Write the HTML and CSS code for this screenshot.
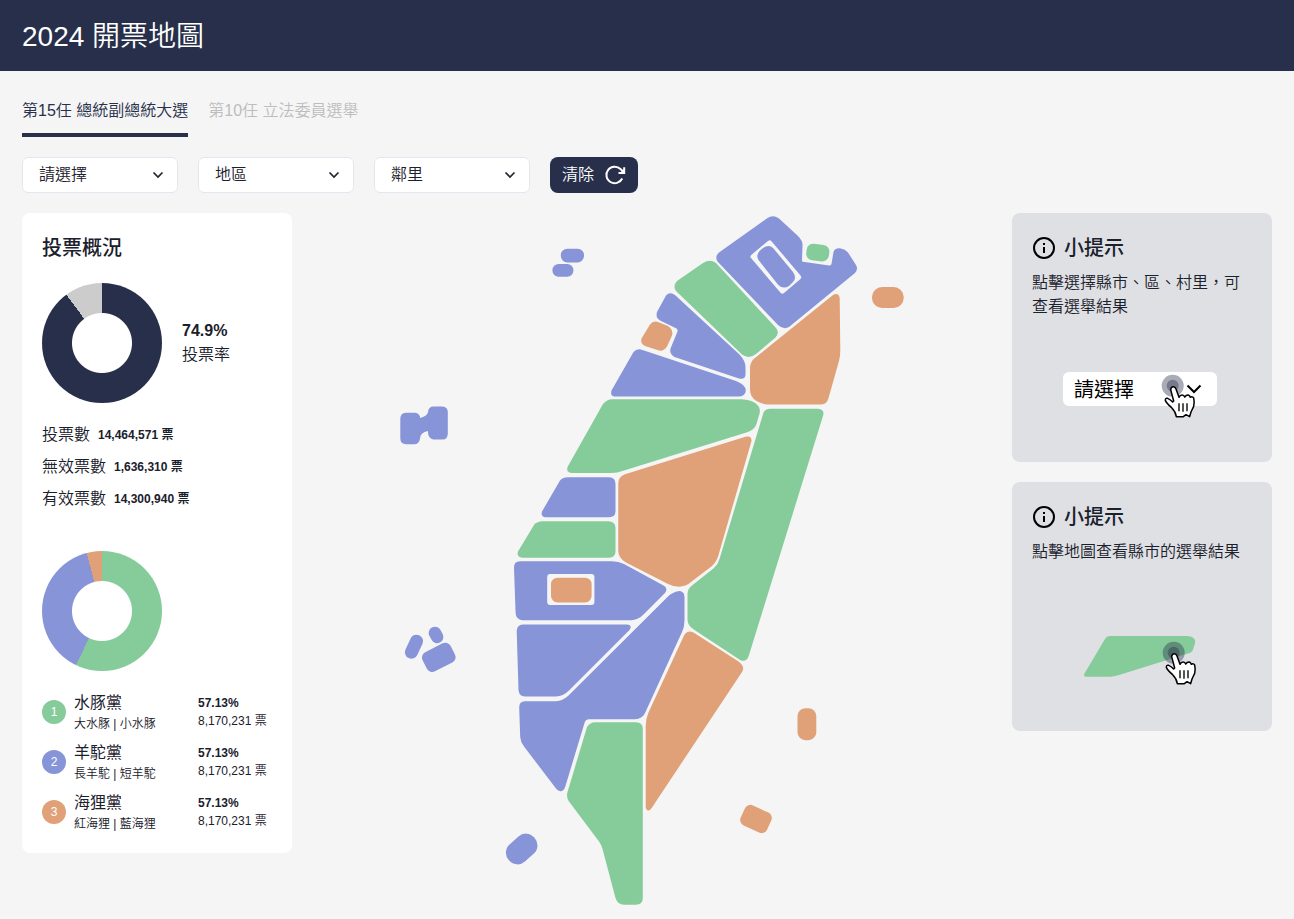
FILE: index.html
```html
<!DOCTYPE html>
<html lang="zh-Hant">
<head>
<meta charset="utf-8">
<title>2024 開票地圖</title>
<link rel="stylesheet" href="styles.css">
</head>
<body>
<svg class="defs" width="0" height="0">
  <symbol id="chevron" viewBox="0 0 12 12"><path d="M1.5 3.5 6 8l4.500-4.500" fill="none" stroke="#1f2430" stroke-width="1.700"/></symbol>
  <symbol id="info" viewBox="0 0 24 24"><circle cx="12" cy="12" r="10" fill="none" stroke="#000" stroke-width="2"/><path d="M12 11v6M12 7v2" stroke="#000" stroke-width="2"/></symbol>
  <symbol id="hand" viewBox="0 0 100 100" overflow="visible">
    <path d="M512 554Q513 545 520 545Q526 545 528 552L537 577Q540 570 546 570Q552 570 554 576Q559 569 565 570Q570 572 571 577Q577 573 581 579Q584 590 581 604L573 621L569 635L558 629L550 635L529 635Q527 620 515 608Q500 595 496 586Q496 578 503 580Q512 584 518 591L521 588Z" fill="#fff" stroke="#000" stroke-width="4.500" stroke-linejoin="round"/>
    <path d="M537 595V619M549 595V620M561 595V619" stroke="#000" stroke-width="4"/>
  </symbol>
</svg>
<header class="header"><h1>2024 開票地圖</h1></header>
<main class="main">
  <nav class="tabs">
    <a class="tab tab-active">第15任 總統副總統大選</a>
    <a class="tab">第10任 立法委員選舉</a>
  </nav>
  <div class="filters">
    <div class="select"><span>請選擇</span><svg class="chev"><use href="#chevron"/></svg></div>
    <div class="select"><span>地區</span><svg class="chev"><use href="#chevron"/></svg></div>
    <div class="select"><span>鄰里</span><svg class="chev"><use href="#chevron"/></svg></div>
    <button class="clear"><span>清除</span>
      <svg width="24" height="24" viewBox="0 0 24 24" fill="none" stroke="#fff" stroke-width="2"><path d="M19.200 15.500A8.300 8.300 0 1 1 17.500 6L20.500 9"/><path d="M21.200 4.300V10H15.500"/><path d="M21.500 5.500V10.300H16.700Z" fill="#fff" stroke="none"/></svg>
    </button>
  </div>
  <div class="content">
    <section class="panel">
      <h2>投票概況</h2>
      <div class="turnout">
        <div class="donut donut-turnout"></div>
        <div><div class="rate">74.9%</div><div class="rate-label">投票率</div></div>
      </div>
      <div class="stats">
        <div class="stat"><span>投票數</span><b>14,464,571 票</b></div>
        <div class="stat"><span>無效票數</span><b>1,636,310 票</b></div>
        <div class="stat"><span>有效票數</span><b>14,300,940 票</b></div>
      </div>
      <div class="donut donut-parties"></div>
      <div class="parties">
        <div class="party"><span class="badge green">1</span><div class="who"><div class="name">水豚黨</div><div class="pair">大水豚 | 小水豚</div></div><div class="votes"><b>57.13%</b><div>8,170,231 票</div></div></div>
        <div class="party"><span class="badge blue">2</span><div class="who"><div class="name">羊駝黨</div><div class="pair">長羊駝 | 短羊駝</div></div><div class="votes"><b>57.13%</b><div>8,170,231 票</div></div></div>
        <div class="party"><span class="badge orange">3</span><div class="who"><div class="name">海狸黨</div><div class="pair">紅海狸 | 藍海狸</div></div><div class="votes"><b>57.13%</b><div>8,170,231 票</div></div></div>
      </div>
    </section>

    <svg class="map" viewBox="312 213 680 696">
      <g class="fill-blue">
        <path d="M767.5 218Q773 214.500 779 218.500L798 236Q803 241 802.500 246L802 260Q801.800 261.500 803 261.700L829 265.500Q831 265.500 831.500 264L833.500 252Q835 247.500 841 248.500Q845 249 848 252.500L856 265Q858.500 269 855 273L789 327Q783.500 330 778 325L717.500 261.500Q714.500 256.500 719 252.500Z"/>
        <path d="M666 295.500Q670 291 675.500 295.500L739.500 354.500Q745.500 361 745.500 367V375Q744.500 380 739 378.500L674.500 357Q669 354 670.500 348.500L677.500 331.500Q678 329.500 676.500 328.500L660 320.500Q655 317 657 312Z"/>
        <path d="M633.5 352Q637 348 642.500 350L736 381Q745.500 384.500 745.800 390.500Q745.500 396.500 738 396.500H614Q610 395.500 611.500 390.500Z"/>
        <path d="M560 480.500Q563 477.300 568 477.300H609Q615.500 477.500 615.500 484V511Q615.500 517.200 609 517.200H545Q540.500 516.500 542 511.500Z"/>
        <path d="M514 567.500Q514 561.200 520 561.200H612Q618.500 561.300 624 564L663.500 585.500Q668.500 588.500 665 593L644 614Q638.500 620 631 620.200H523Q516 620 515.600 613Z"/>
        <path d="M516.7 631Q517 624.500 523 624.500H627Q633 625 629.500 630L569 690.500Q563 696.300 556 696.500H525Q519 696.300 518.500 690Z"/>
        <path d="M672 593.500Q676 590.800 680 591Q684.500 592 684.500 597V620Q684.500 627 682 632L645.500 712Q642.500 719.300 635 719.300H589Q585.500 719.300 584.500 723L565 787.500Q563 791.500 560.500 791.200Q558 791 556 788.500L524 746.500Q520.500 742 520.200 737L519.200 708Q519 701.300 525 701.300H555Q562 701.300 568 696L667 597.500Q669 595 672 593.500Z"/>
        <rect x="560.8" y="248.7" width="23.2" height="13.7" rx="6.5"/>
        <rect x="552.4" y="264" width="21" height="12.8" rx="6.200"/>
        <path d="M405.800 412.700H415Q419.500 413 420.300 418Q427.500 415.800 428 412Q428.500 406.500 433.500 406.500H442.500Q447.800 407 447.800 412V434Q447.500 439.500 442.500 439.500H433.500Q428.300 439 427.800 431Q420.500 432.500 420.200 437.500Q419.500 444 415 444.200H406Q400.500 444 400.300 438.500V418.500Q400.500 413 405.800 412.700Z"/>
        <rect x="407.5" y="634.2" width="13" height="25" rx="6.300" transform="rotate(25 414 646.700)"/>
        <rect x="429.8" y="626.5" width="12.500" height="17" rx="6" transform="rotate(-28 436 635)"/>
        <rect x="423" y="646.600" width="31.500" height="21.500" rx="6" transform="rotate(-27 438.700 657.300)"/>
        <rect x="504.700" y="837.500" width="34" height="23" rx="11" transform="rotate(-42 521.700 849)"/>
      </g>
      <g class="fill-green">
        <rect x="806.400" y="244.300" width="22.800" height="16.600" rx="6.500" transform="rotate(7 817.700 252.500)"/>
        <path d="M703 263Q710 258.500 716 263L776 328Q780 333 775.500 337.500L756 354Q749 359.500 742 354.500L676 291Q672.500 286 677 281Z"/>
        <path d="M603 404Q607 399.300 612 399.300H740Q748 399.300 753.500 402Q761 406 759.700 413L756.500 424Q754.500 429.500 748 432L624 470.500Q617 473 611 473H572Q565.500 472.500 567.500 467Z"/>
        <path d="M763.500 412.500Q765.500 408.800 770 408.800H818Q824.500 409.500 823.300 415L749 655Q747 662.500 740.500 660.200L696 631Q687.500 626 687.500 620V594Q687.500 588.500 692 585.500L714 568Q718 564.500 719.500 559Z"/>
        <path d="M534 525Q537 521.300 543 521.300H608Q615.500 521.500 615.500 528V551Q615.500 557.800 609 557.800H522Q516 556.500 518 551.500Z"/>
        <path d="M587 727Q590 722.300 595 722.300H636Q642.800 722.300 642.800 729V898Q642.800 904.800 636 904.800H624Q617.500 904.500 615.500 898L602.500 849Q601.500 845 599 841.500L569 801.500Q566 797.500 567.500 792Z"/>
      </g>
      <g class="fill-gap">
        <path d="M751 258Q749.500 256.300 751.500 254.800L768 241Q770 239.500 771.500 241.200L800.500 275.500Q802 277.300 800.500 279L784 293Q782 294.500 780.500 292.800Z"/>
        <rect x="547.200" y="574" width="47.200" height="31" rx="3"/>
      </g>
      <path class="fill-blue" d="M758.500 260Q755.500 255 760 250.500L763 248Q769 244 773.500 248.500L793 272Q797 278 793 282L789 286Q782.500 290 777.500 284Z"/>
      <g class="fill-orange">
        <path d="M650 324.500Q653 320.500 658 322L668 326Q673.500 329.500 672 335.500L667 346.500Q664 351.500 659 350.500L645 346Q640 343.500 641.500 338.500Z"/>
        <path d="M833 295Q838.500 292 839.700 298L840.300 350Q840.300 356 839 361L828.500 398Q827 404.500 821 404.500H768Q762 404.300 756.500 401Q750 397 750 390V368Q750 361.500 755.500 357.500Z"/>
        <path d="M743 437.500Q752 434.500 751.500 441L718.500 555Q716.500 562 712 566L691 582Q686 586.500 679 586.700Q673 586.500 668 584L626 562.500Q618.300 558 618.300 551V483Q618.300 477 625 474.300Z"/>
        <path d="M684.500 634.500Q688 629.500 693.500 632.500L738.500 661.500Q745.500 666.500 742 672L652 807.500Q650 811 648 810.500Q645.700 810 645.700 806V726Q645.700 719 648.500 712.500Z"/>
        <rect x="551" y="577.700" width="40.600" height="24.800" rx="6.500"/>
        <rect x="872" y="287" width="31.700" height="21" rx="10"/>
        <rect x="797.500" y="708.200" width="18.800" height="32" rx="8"/>
        <rect x="741.500" y="808" width="29" height="22" rx="6" transform="rotate(25 756 819)"/>
      </g>
    </svg>

    <aside class="tips">
      <section class="tip">
        <h3><svg width="24" height="24"><use href="#info"/></svg>小提示</h3>
        <p>點擊選擇縣市、區、村里，可查看選舉結果</p>
        <svg class="demo" viewBox="1032 332 220 110">
          <rect x="1063" y="372" width="154" height="34" rx="6" fill="#fff"/>
          <text x="1074" y="397" class="demo-text">請選擇</text>
          <path d="M1187.500 385.500 1194 392 1200.500 385.500" fill="none" stroke="#000" stroke-width="2"/>
          <circle class="ring" cx="1172.700" cy="385.700" r="11"/><circle class="ring" cx="1172.700" cy="385.700" r="6"/>
          <g transform="translate(1000 205) scale(.33333)"><use href="#hand" width="100" height="100"/></g>
        </svg>
      </section>
      <section class="tip">
        <h3><svg width="24" height="24"><use href="#info"/></svg>小提示</h3>
        <p>點擊地圖查看縣市的選舉結果</p>
        <svg class="demo" viewBox="1032 601 220 110">
          <path class="fill-green" d="M1105 639Q1106.500 636 1110 636H1187Q1191 636 1193.500 638Q1196 640 1194.800 644L1193 649.500Q1192 652.500 1188 653.500L1119 675Q1114 676.800 1110 676.800H1086Q1083 676.500 1084.500 673.500Z"/>
          <circle class="ring" cx="1173.700" cy="652.700" r="11"/><circle class="ring" cx="1173.700" cy="652.700" r="6"/>
          <g transform="translate(1001 472) scale(.33333)"><use href="#hand" width="100" height="100"/></g>
        </svg>
      </section>
    </aside>
  </div>
</main>
</body>
</html>
```
FILE: styles.css
```css
* { box-sizing: border-box; }
body {
  margin: 0;
  background: #f5f5f5;
  color: #1a202c;
  font: 350 16px/24px "Liberation Sans", "Noto Sans CJK TC", sans-serif;
}
h1, h2, h3, p { margin: 0; }
b { font-weight: 700; }
.defs { position: absolute; }
.header {
  height: 71px;
  padding: 2px 22px 0;
  display: flex;
  align-items: center;
  background: #272f4b;
  color: #fff;
}
.header h1 { font-size: 28px; font-weight: 350; line-height: 42px; }
.main { padding: 26px 22px 0; }
.tabs { display: flex; gap: 20px; height: 40px; }
.tab { padding-top: 2px; color: #bdbdbd; white-space: nowrap; }
.tab-active { color: #272f4b; border-bottom: 4px solid #272f4b; }
.filters { display: flex; gap: 20px; margin-top: 20px; height: 36px; }
.select {
  width: 156px;
  padding: 0 13px 0 16px;
  display: flex;
  justify-content: space-between;
  align-items: center;
  background: #fff;
  border: 1px solid #e2e8f0;
  border-radius: 6px;
}
.chev { width: 12px; height: 12px; }
.clear {
  width: 88px;
  padding: 0 11px 0 12px;
  border: 0;
  border-radius: 8px;
  display: flex;
  align-items: center;
  justify-content: space-between;
  background: #272f4b;
  color: #fff;
  font: inherit;
}
.content {
  margin-top: 20px;
  display: grid;
  grid-template-columns: 270px 680px 260px;
  gap: 20px;
  align-items: start;
}
.panel { height: 640px; padding: 21px 20px 20px; background: #fff; border-radius: 8px; }
.panel h2 { font-size: 20px; font-weight: 500; line-height: 28px; }
.turnout { display: flex; align-items: center; gap: 20px; margin-top: 21px; }
.rate { font-weight: 700; }
.donut { width: 120px; height: 120px; border-radius: 50%; }
.donut-turnout { background: radial-gradient(circle, #fff 29.500px, transparent 30.500px), conic-gradient(#272f4b 0 89.900%, #ccc 89.900%); }
.donut-parties {
  margin-top: 40px;
  background: radial-gradient(circle, #fff 29.500px, transparent 30.500px), conic-gradient(#86cc9a 0 57.130%, #8794d8 57.130% 95.900%, #e0a178 95.900%);
}
.stats { margin-top: 20px; display: flex; flex-direction: column; gap: 8px; }
.stat { display: flex; gap: 8px; align-items: center; }
.stat b { font-size: 12px; }
.parties { margin-top: 20px; display: flex; flex-direction: column; gap: 8px; }
.party { display: flex; align-items: center; height: 42px; }
.badge {
  width: 24px;
  height: 24px;
  border-radius: 50%;
  color: #fff;
  font-size: 12px;
  font-weight: 400;
  text-align: center;
}
.green { background: #86cc9a; }
.blue { background: #8794d8; }
.orange { background: #e0a178; }
.who { width: 124px; padding-left: 8px; }
.name { font-weight: 400; }
.pair { font-size: 12px; line-height: 18px; }
.votes { margin-left: 8px; font-size: 12px; line-height: 18px; white-space: nowrap; }
.votes b { display: block; }
.map { width: 680px; height: 696px; display: block; }
.fill-blue { fill: #8794d8; }
.fill-green { fill: #86cc9a; }
.fill-orange { fill: #e0a178; }
.fill-gap { fill: #f5f5f5; }
.tips { display: flex; flex-direction: column; gap: 20px; }
.tip {
  height: 249px;
  padding: 21px 20px 20px;
  display: flex;
  flex-direction: column;
  background: #dfe0e4;
  border-radius: 8px;
}
.tip h3 { display: flex; align-items: center; gap: 8px; font-size: 20px; font-weight: 500; line-height: 28px; }
.tip p { margin-top: 9px; width: 212px; }
.demo { width: 220px; height: 110px; margin-top: auto; }
.demo-text { font-size: 20px; font-weight: 400; }
.ring { fill: #272f4b; opacity: .4; }
```
